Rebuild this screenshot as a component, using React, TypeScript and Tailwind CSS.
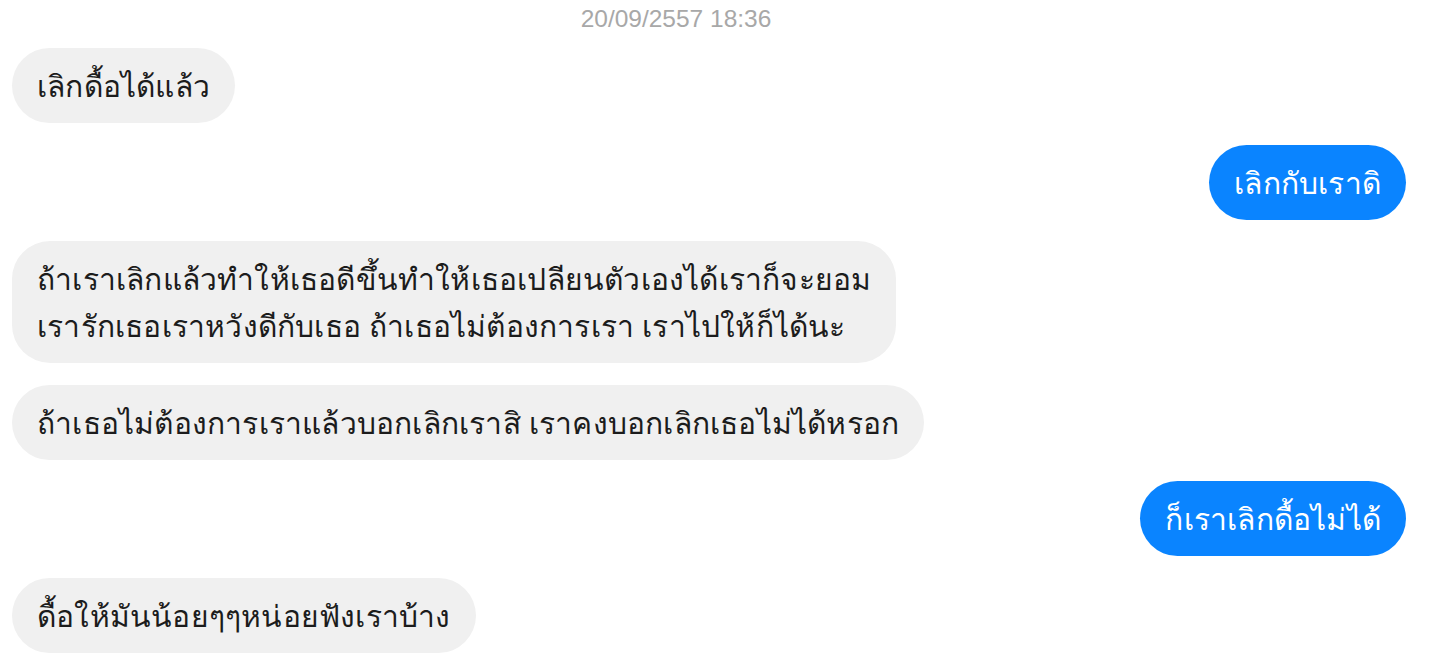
const messages: { mine: boolean; lines: string[] }[] = [
  { mine: false, lines: ['เลิกดื้อได้แล้ว'] },
  { mine: true, lines: ['เลิกกับเราดิ'] },
  {
    mine: false,
    lines: [
      'ถ้าเราเลิกแล้วทำให้เธอดีขึ้นทำให้เธอเปลียนตัวเองได้เราก็จะยอม',
      'เรารักเธอเราหวังดีกับเธอ ถ้าเธอไม่ต้องการเรา เราไปให้ก็ได้นะ',
    ],
  },
  { mine: false, lines: ['ถ้าเธอไม่ต้องการเราแล้วบอกเลิกเราสิ เราคงบอกเลิกเธอไม่ได้หรอก'] },
  { mine: true, lines: ['ก็เราเลิกดื้อไม่ได้'] },
  { mine: false, lines: ['ดื้อให้มันน้อยๆๆหน่อยฟังเราบ้าง'] },
]

export default function App() {
  return (
    <div className="w-[1446px] h-[661px] overflow-hidden bg-white font-['Noto_Sans',sans-serif]">
      <div className="pt-[7px] pr-[94px] text-center font-['Liberation_Sans',Arial,sans-serif] text-[24.5px] leading-[24px] text-[#a8a8a8]">
        20/09/2557 18:36
      </div>
      <div className="flex flex-col gap-[21.5px] px-3 pt-[17px]">
        {messages.map((m, i) => (
          <div key={i} className={`flex ${m.mine ? 'justify-end pr-[28px]' : 'justify-start'}`}>
            <div
              className={`rounded-[38px] px-[25px] py-[14px] text-[30px] leading-[47px] tracking-[0.2px] ${
                m.mine ? 'bg-[#0a84ff] text-white' : 'bg-[#f0f0f0] text-[#1c1c1c]'
              }`}
            >
              {m.lines.map((l, j) => (
                <div key={j} className="whitespace-nowrap">{l}</div>
              ))}
            </div>
          </div>
        ))}
      </div>
    </div>
  )
}
